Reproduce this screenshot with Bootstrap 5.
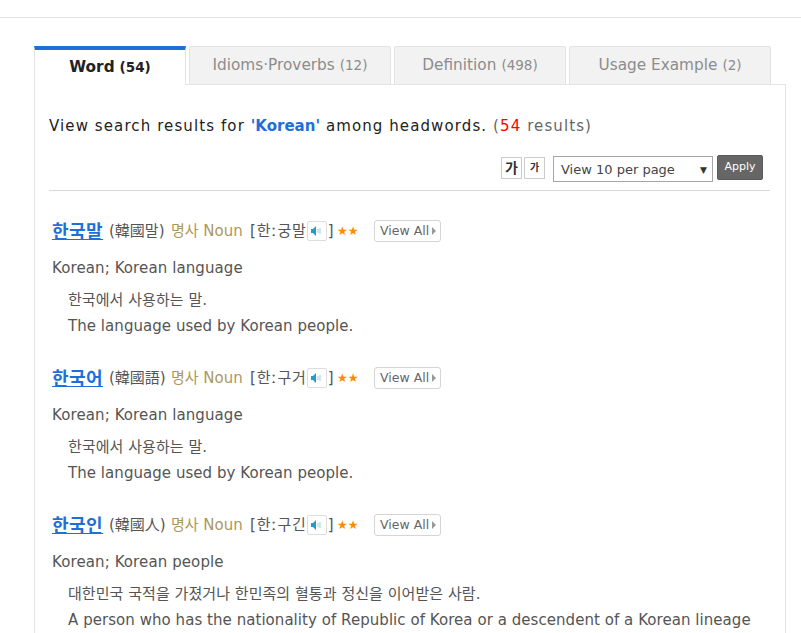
<!DOCTYPE html>
<html lang="en">
<head>
  <meta charset="UTF-8">
  <title>Korean search results</title>
  <link href="https://cdn.jsdelivr.net/npm/bootstrap@5.3.0/dist/css/bootstrap.min.css" rel="stylesheet">
  <style>
    html, body { height: 633px; overflow: hidden; }
    body { font-family: "DejaVu Sans", "Noto Sans CJK KR", sans-serif; font-size: 15px; color: #555; background: #fff; }
    .top-rule { height: 18px; border-bottom: 1px solid #e5e5e5; }
    .search-wrap { margin: 28px 15px 0 34px; }
    .tab-row { display: flex; gap: 3px; height: 39px; position: relative; z-index: 1; }
    .tab-item { height: 39px; background: #f2f2f2; border: 1px solid #e3e3e3; border-radius: 2px 2px 0 0; color: #8c8c8c; font-size: 15.3px; display: flex; align-items: center; justify-content: center; gap: 5px; text-decoration: none; }
    .tab-item span { font-size: 13.5px; }
    .tab-item.on { background: #fff; border-top: 4px solid #1f6fd8; border-bottom: 0; border-radius: 0; color: #222; font-weight: 700; width: 152px; }
    .tab-idioms { width: 202px; }
    .tab-def { width: 172px; }
    .tab-usage { width: 202px; }
    .result-box { border: 1px solid #e3e3e3; border-bottom: 0; margin-top: -1px; height: 549px; overflow: hidden; padding: 0 22px 0 14px; }
    .summary { margin: 31px 0 0; font-size: 15px; letter-spacing: 1.1px; color: #222; line-height: 20px; white-space: nowrap; }
    .summary b { color: #1f6fd8; letter-spacing: 0; }
    .summary .count { color: #666; }
    .summary em { color: #f00; font-style: normal; }
    .tools { height: 55px; border-bottom: 1px solid #d9d9d9; margin-right: -7px; padding-right: 7px; padding-top: 19px; display: flex; justify-content: flex-end; align-items: flex-start; }
    .size-btn { width: 21px; height: 22px; margin-top: 2px; border: 1px solid #ccc; background: #fff; color: #333; font-weight: 700; font-size: 14px; line-height: 20px; text-align: center; padding: 0; margin-right: 2px; }
    .size-btn.small-size { font-size: 10px; margin-right: 8px; }
    .per-page { width: 160px; height: 26px; border: 1px solid #a6a6a6; color: #444; font-size: 13px; padding: 1px 5px 0 7px; line-height: 24px; display: flex; justify-content: space-between; align-items: center; margin-right: 4px; margin-top: 1px; }
    .per-page i { font-style: normal; font-size: 9px; color: #333; }
    .apply-btn { width: 46px; height: 25px; background: #666; border: 1px solid #5a5a5a; border-radius: 2px; color: #fff; font-size: 11px; padding: 0; }
    .entry { padding-left: 3px; }
    .entry-head { display: flex; align-items: center; height: 30px; white-space: nowrap; }
    .word { font-size: 18px; font-weight: 700; letter-spacing: .5px; color: #1f6fd8; text-decoration: underline; width: 57px; }
    .hanja { width: 62px; color: #555; }
    .pos { color: #ab9760; width: 79px; }
    .pron { color: #555; width: 87px; letter-spacing: .9px; }
    .speaker { display: inline-flex; width: 20px; height: 20px; border: 1px solid #ddd; border-radius: 2px; align-items: center; justify-content: center; vertical-align: middle; margin: 0 1px 0 0; }
    .stars { color: #ff8a00; font-size: 12px; width: 37px; }
    .view-all { display: inline-flex; align-items: center; gap: 3px; height: 22px; padding: 0 4px 0 5px; border: 1px solid #d5d5d5; border-radius: 3px; background: #fff; color: #666; font-size: 12.5px; text-decoration: none; }
    .view-all::after { content: ""; border-left: 4px solid #999; border-top: 4px solid transparent; border-bottom: 4px solid transparent; }
    .meaning { margin: 12px 0 0; line-height: 20px; letter-spacing: .1px; }
    .gloss { margin: 9px 0 0 16px; line-height: 26px; letter-spacing: .05px; }
    .gloss p { margin: 0; }
    .entry + .entry { margin-top: 24px; }
    .entries { margin-top: 25px; }
  </style>
</head>
<body>

<div class="top-rule"></div>

<div class="search-wrap">
  <nav class="tab-row">
    <a class="tab-item on" href="#">Word <span>(54)</span></a>
    <a class="tab-item tab-idioms" href="#">Idioms·Proverbs <span>(12)</span></a>
    <a class="tab-item tab-def" href="#">Definition <span>(498)</span></a>
    <a class="tab-item tab-usage" href="#">Usage Example <span>(2)</span></a>
  </nav>

  <div class="result-box">
    <p class="summary">View search results for <b>'Korean'</b> among headwords. <span class="count">(<em>54</em> results)</span></p>

    <div class="tools">
      <button class="size-btn" type="button">가</button>
      <button class="size-btn small-size" type="button">가</button>
      <div class="per-page">View 10 per page <i>▼</i></div>
      <button class="apply-btn" type="button">Apply</button>
    </div>

    <div class="entries">
      <div class="entry">
        <div class="entry-head">
          <a class="word" href="#">한국말</a>
          <span class="hanja">(韓國말)</span>
          <span class="pos">명사 Noun</span>
          <span class="pron">[한ː궁말<span class="speaker"><svg width="12" height="10" viewBox="0 0 12 10"><path d="M0 3h2l3-3v10L2 7H0z" fill="#1f9bd1"/><path d="M7 3v4M9 2v6" stroke="#9ccde6" fill="none"/></svg></span>]</span>
          <span class="stars">★★</span>
          <a class="view-all" href="#">View All</a>
        </div>
        <p class="meaning">Korean; Korean language</p>
        <div class="gloss">
          <p>한국에서 사용하는 말.</p>
          <p>The language used by Korean people.</p>
        </div>
      </div>

      <div class="entry">
        <div class="entry-head">
          <a class="word" href="#">한국어</a>
          <span class="hanja">(韓國語)</span>
          <span class="pos">명사 Noun</span>
          <span class="pron">[한ː구거<span class="speaker"><svg width="12" height="10" viewBox="0 0 12 10"><path d="M0 3h2l3-3v10L2 7H0z" fill="#1f9bd1"/><path d="M7 3v4M9 2v6" stroke="#9ccde6" fill="none"/></svg></span>]</span>
          <span class="stars">★★</span>
          <a class="view-all" href="#">View All</a>
        </div>
        <p class="meaning">Korean; Korean language</p>
        <div class="gloss">
          <p>한국에서 사용하는 말.</p>
          <p>The language used by Korean people.</p>
        </div>
      </div>

      <div class="entry">
        <div class="entry-head">
          <a class="word" href="#">한국인</a>
          <span class="hanja">(韓國人)</span>
          <span class="pos">명사 Noun</span>
          <span class="pron">[한ː구긴<span class="speaker"><svg width="12" height="10" viewBox="0 0 12 10"><path d="M0 3h2l3-3v10L2 7H0z" fill="#1f9bd1"/><path d="M7 3v4M9 2v6" stroke="#9ccde6" fill="none"/></svg></span>]</span>
          <span class="stars">★★</span>
          <a class="view-all" href="#">View All</a>
        </div>
        <p class="meaning">Korean; Korean people</p>
        <div class="gloss">
          <p>대한민국 국적을 가졌거나 한민족의 혈통과 정신을 이어받은 사람.</p>
          <p>A person who has the nationality of Republic of Korea or a descendent of a Korean lineage and spirit.</p>
        </div>
      </div>
    </div>
  </div>
</div>

<script src="https://cdn.jsdelivr.net/npm/bootstrap@5.3.0/dist/js/bootstrap.bundle.min.js"></script>
</body>
</html>
